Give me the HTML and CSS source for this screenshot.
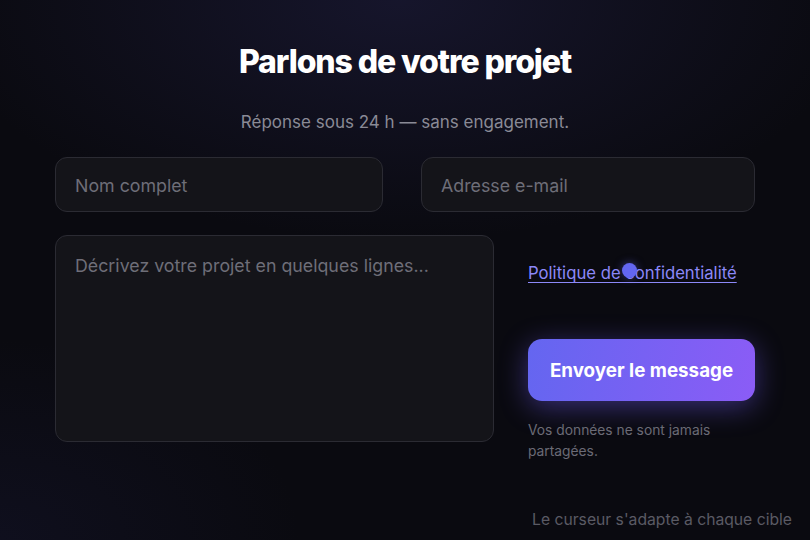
FILE: index.html
```html
<!DOCTYPE html>
<html>
<head>
	<title>Contact</title>
	<link rel="stylesheet" href="styles.css">
</head>
<body>
	<div class="page">
		<div class="header">
			<h1>Parlons de votre projet</h1>
			<p>Réponse sous 24 h — sans engagement.</p>
		</div>

		<form class="contact">
			<div class="row row-top">
				<input type="text" placeholder="Nom complet">
				<input type="email" placeholder="Adresse e-mail">
			</div>
			<div class="row row-bottom">
				<textarea placeholder="Décrivez votre projet en quelques lignes..."></textarea>
				<div class="side">
					<a href="#" class="policy">Politique de confidentialité</a>
					<button type="button">Envoyer le message</button>
					<p class="note">Vos données ne sont jamais partagées.</p>
				</div>
			</div>
		</form>

		<div class="footer">Le curseur s'adapte à chaque cible</div>
	</div>

	<div class="cursor"></div>
</body>
</html>
```

FILE: styles.css
```css
* {
	margin: 0;
	padding: 0;
	box-sizing: border-box;
	font-family: Inter, "Liberation Sans", sans-serif;
}

body {
	width: 810px;
	height: 540px;
	overflow: hidden;
	background:
		radial-gradient(ellipse 460px 240px at 400px 0px, rgba(40, 38, 85, 0.4), transparent),
		radial-gradient(ellipse 300px 200px at 0px 540px, rgba(30, 30, 70, 0.25), transparent),
		#0a0a10;
}

.page {
	display: flex;
	flex-direction: column;
	height: 540px;
}

.header {
	text-align: center;
	padding-top: 43px;
}

.header h1 {
	color: #fff;
	font-size: 32px;
	line-height: 38px;
	font-weight: 800;
	letter-spacing: -1.1px;
}

.header p {
	color: #8a8a96;
	font-size: 17px;
	line-height: 20px;
	margin-top: 31px;
}

.contact {
	width: 700px;
	margin: 25px auto 0;
}

.row {
	display: grid;
}

.row-top {
	grid-template-columns: 328px 1fr;
	gap: 38px;
}

.row-bottom {
	grid-template-columns: 439px 1fr;
	gap: 34px;
	margin-top: 23px;
}

input,
textarea {
	background: #141419;
	border: 1px solid #2b2b33;
	border-radius: 12px;
	color: #ddd;
	font-size: 17.8px;
	padding: 0 19px;
	outline: none;
}

input {
	height: 55px;
	padding-top: 2px;
}

textarea {
	height: 207px;
	padding-top: 18px;
	resize: none;
	line-height: 24px;
}

input::placeholder,
textarea::placeholder {
	color: #6e6e78;
}

.side {
	display: flex;
	flex-direction: column;
	align-items: flex-start;
	padding-top: 28px;
}

.policy {
	color: #8c88f8;
	font-size: 16.7px;
	line-height: 20px;
	text-decoration: underline;
	text-underline-offset: 3px;
	text-decoration-thickness: 1px;
}

button {
	width: 227px;
	height: 62px;
	margin-top: 56px;
	border: none;
	border-radius: 14px;
	color: #fff;
	font-size: 18.8px;
	font-weight: 700;
	background: linear-gradient(100deg, #6466f0, #8b5cf6);
	box-shadow: 0 6px 28px rgba(110, 90, 240, 0.45);
}

.note {
	color: #6b6b76;
	font-size: 13.8px;
	line-height: 21px;
	margin-top: 19px;
}

.footer {
	margin-top: auto;
	text-align: right;
	color: #5a5a64;
	font-size: 15.7px;
	padding: 0 18px 11px 0;
}

.cursor {
	position: absolute;
	left: 622px;
	top: 263px;
	width: 15px;
	height: 15px;
	border-radius: 50%;
	background: #6366f1;
	box-shadow: 0 0 8px rgba(99, 102, 241, 0.5);
}
```
